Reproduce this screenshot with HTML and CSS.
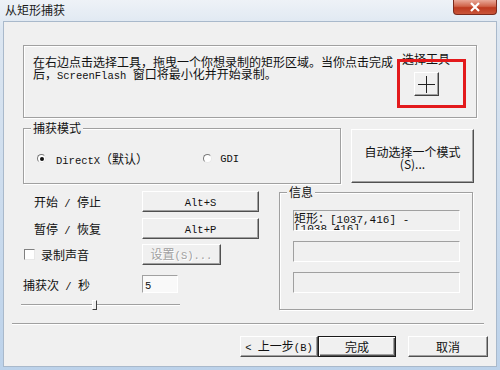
FILE: index.html
```html
<!DOCTYPE html>
<html>
<head>
  <link rel="stylesheet" href="styles.css">
</head>
<body>
  <div class="window">
    <div class="titlebar">
      <span class="title">从矩形捕获</span>
      <div class="close-btn">
        <svg width="14" height="10" viewBox="0 0 14 10"><path d="M3 1 L11 9 M11 1 L3 9" stroke="#fff" stroke-width="2.2" fill="none"/></svg>
      </div>
    </div>

    <div class="client">
      <div class="intro">
        <p class="intro-text">在右边点击选择工具，拖曳一个你想录制的矩形区域。当你点击完成<br>后，<span class="en">ScreenFlash </span>窗口将最小化并开始录制。</p>
        <div class="tool">
          <span class="tool-label">选择工具</span>
          <button class="tool-btn" type="button">
            <svg width="17" height="17" viewBox="0 0 17 17"><path d="M8.5 0 V17 M0 8.5 H17" stroke="#222" stroke-width="1" fill="none"/></svg>
          </button>
          <div class="highlight"></div>
        </div>
      </div>

      <div class="mode-row">
        <div class="group mode-group">
          <span class="legend">捕获模式</span>
          <div class="radios">
            <label class="radio"><span class="radio-dot checked"></span><span><span class="en">DirectX</span>（默认）</span></label>
            <label class="radio radio-gdi"><span class="radio-dot"></span><span class="en">GDI</span></label>
          </div>
        </div>
        <button class="btn auto-btn" type="button">自动选择一个模式<br>(S)...</button>
      </div>

      <div class="lower">
        <div class="controls">
          <div class="ctl-row">
            <span class="ctl-label indent">开始<span class="en"> / </span>停止</span>
            <button class="btn hotkey" type="button"><span class="en">Alt+S</span></button>
          </div>
          <div class="ctl-row row-pause">
            <span class="ctl-label indent">暂停<span class="en"> / </span>恢复</span>
            <button class="btn hotkey" type="button"><span class="en">Alt+P</span></button>
          </div>
          <div class="ctl-row row-audio">
            <label class="ctl-label check"><span class="checkbox"></span>录制声音</label>
            <button class="btn settings" type="button" disabled>设置<span class="en">(S)...</span></button>
          </div>
          <div class="ctl-row row-rate">
            <span class="ctl-label">捕获次<span class="en"> / </span>秒</span>
            <div class="rate-input"><span class="en">5</span></div>
          </div>
          <div class="slider">
            <div class="slider-track"></div>
            <div class="slider-thumb"></div>
          </div>
        </div>

        <div class="group info-group">
          <span class="legend">信息</span>
          <div class="field">
            <div class="field-line">矩形：<span class="en">[1037,416] -</span></div>
            <div class="field-line en">[1038,416]</div>
          </div>
          <div class="field"></div>
          <div class="field"></div>
        </div>
      </div>

      <div class="separator"></div>

      <div class="footer">
        <button class="btn footer-btn" type="button"><span class="en">&lt; </span>上一步<span class="en">(B)</span></button>
        <button class="btn footer-btn default" type="button">完成</button>
        <button class="btn footer-btn cancel" type="button">取消</button>
      </div>
    </div>
  </div>
</body>
</html>
```

FILE: styles.css
```css
body {
  margin: 0;
  font-family: "Noto Sans CJK SC", sans-serif;
  font-size: 12px;
  color: #111;
}

.en {
  font-family: "Liberation Mono", monospace;
  font-size: 10.5px;
}

.window {
  width: 500px;
  height: 370px;
  box-sizing: border-box;
  padding: 0 3px 3px 3px;
  background: linear-gradient(#eef2f7, #dce6f1 30px, #bcd2ea);
  display: flex;
  flex-direction: column;
}

.titlebar {
  height: 21px;
  display: flex;
  align-items: flex-start;
}

.title {
  margin: 2px 0 0 2px;
  line-height: 16px;
  color: #1a1a1a;
}

.close-btn {
  margin-left: auto;
  width: 44px;
  height: 15px;
  box-sizing: border-box;
  border: 1px solid #7b2a1c;
  border-top: none;
  border-radius: 0 0 4px 4px;
  background: linear-gradient(#e9a999, #d0644a 45%, #bd3a1f 55%, #c9553a);
  display: flex;
  align-items: center;
  justify-content: center;
}

.client {
  flex: 1;
  background: #f0f0f0;
  border: 1px solid #a9b9cb;
  display: flex;
  flex-direction: column;
}

/* etched frames and 3d controls */
.group {
  position: relative;
  box-sizing: border-box;
  border: 1px solid #a0a0a0;
  box-shadow: inset 1px 1px #fff, 1px 1px #fff;
}

.legend {
  position: absolute;
  top: -8px;
  left: 7px;
  padding: 0 2px;
  background: #f0f0f0;
  line-height: 14px;
}

.btn {
  font-family: "Noto Sans CJK SC", sans-serif;
  font-size: 12px;
  color: #111;
  background: #f0f0f0;
  box-sizing: border-box;
  border: 1px solid;
  border-color: #fff #505050 #505050 #fff;
  box-shadow: inset -1px -1px #a0a0a0;
  padding: 0;
  line-height: 14px;
}

/* intro box */
.intro {
  margin: 23px 0 0 19px;
  width: 454px;
  height: 73px;
  box-sizing: border-box;
  border: 1px solid #a0a0a0;
  box-shadow: inset 1px 1px #fff, 1px 1px #fff;
  display: flex;
}

.intro-text {
  margin: 10px 0 0 9px;
  width: 369px;
  line-height: 12px;
}

.tool {
  position: relative;
  margin-top: 7px;
  width: 48px;
  display: flex;
  flex-direction: column;
  align-items: center;
}

.tool-label {
  line-height: 12px;
}

.tool-btn {
  margin-top: 7px;
  width: 25px;
  height: 24px;
  padding: 0;
  background: #f0f0f0;
  border: 1px solid;
  border-color: #fff #404040 #404040 #fff;
  box-shadow: inset -1px -1px #a0a0a0;
  display: flex;
  align-items: center;
  justify-content: center;
}

.highlight {
  position: absolute;
  left: -5px;
  top: 6px;
  width: 69px;
  height: 49px;
  box-sizing: border-box;
  border: 3px solid #e31a1c;
}

/* capture mode */
.mode-row {
  margin: 10px 0 0 19px;
  display: flex;
  align-items: flex-start;
}

.mode-group {
  width: 318px;
  height: 56px;
}

.radios {
  margin: 21px 0 0 13px;
  display: flex;
  align-items: center;
}

.radio {
  display: flex;
  align-items: center;
  gap: 10px;
}

.radio-gdi {
  margin-left: 55px;
  gap: 8px;
}

.radio-dot {
  width: 9px;
  height: 9px;
  box-sizing: border-box;
  border-radius: 50%;
  border: 1px solid;
  border-color: #7a7a7a #e8e8e8 #e8e8e8 #7a7a7a;
  background: #fff;
  display: flex;
  align-items: center;
  justify-content: center;
}

.radio-dot.checked::after {
  content: "";
  width: 4px;
  height: 4px;
  border-radius: 50%;
  background: #111;
}

.auto-btn {
  margin: 1px 0 0 10px;
  width: 123px;
  height: 54px;
  padding-top: 4px;
  line-height: 12px;
}

/* lower section */
.lower {
  margin: 7px 0 0 19px;
  display: flex;
  align-items: flex-start;
}

.controls {
  width: 256px;
  display: flex;
  flex-direction: column;
}

.ctl-row {
  height: 21px;
  display: flex;
  align-items: center;
}

.ctl-label {
  width: 119px;
  flex-shrink: 0;
}

.indent {
  padding-left: 11px;
  box-sizing: border-box;
}

.row-pause {
  margin-top: 6px;
}

.row-audio {
  margin-top: 5px;
}

.row-rate {
  margin-top: 10px;
  height: 18px;
}

.hotkey {
  width: 117px;
  height: 21px;
}

.settings {
  width: 79px;
  height: 21px;
  color: #a0a0a0;
  text-shadow: 1px 1px #fff;
}

.check {
  display: flex;
  align-items: center;
  gap: 6px;
  padding-left: 1px;
  box-sizing: border-box;
}

.checkbox {
  width: 11px;
  height: 11px;
  box-sizing: border-box;
  border: 1px solid;
  border-color: #808080 #e8e8e8 #e8e8e8 #808080;
  background: #fff;
}

.rate-input {
  width: 36px;
  height: 18px;
  box-sizing: border-box;
  border: 1px solid;
  border-color: #a0a0a0 #fff #fff #a0a0a0;
  background: #f9f9f9;
  padding-left: 2px;
  line-height: 16px;
}

.slider {
  position: relative;
  margin: 7px 0 0 -2px;
  width: 159px;
  height: 10px;
}

.slider-track {
  margin-top: 4px;
  height: 2px;
  border-top: 1px solid #a0a0a0;
  border-bottom: 1px solid #fff;
  box-sizing: border-box;
}

.slider-thumb {
  position: absolute;
  left: 71px;
  top: 0;
  width: 5px;
  height: 10px;
  box-sizing: border-box;
  background: #f0f0f0;
  border: 1px solid;
  border-color: #fff #404040 #404040 #fff;
}

.info-group {
  margin-top: 1px;
  width: 194px;
  height: 118px;
  padding: 17px 0 0 13px;
  display: flex;
  flex-direction: column;
  gap: 10px;
}

.field {
  width: 167px;
  height: 21px;
  box-sizing: border-box;
  border: 1px solid;
  border-color: #a0a0a0 #fff #fff #a0a0a0;
  overflow: hidden;
  padding-top: 1px;
}

.field-line {
  height: 11px;
  line-height: 12px;
}

.field .en {
  font-size: 11px;
}

/* bottom */
.separator {
  margin: 13px 0 0 8px;
  width: 472px;
  height: 2px;
  box-sizing: border-box;
  border-top: 1px solid #a0a0a0;
  border-bottom: 1px solid #fff;
}

.footer {
  margin-top: 11px;
  padding-right: 8px;
  display: flex;
  justify-content: flex-end;
}

.footer-btn {
  width: 78px;
  height: 21px;
}

.footer-btn.default {
  width: 78px;
  border: 1px solid #1a1a1a;
  box-shadow: inset 1px 1px #fff, inset -1px -1px #505050, inset -2px -2px #a0a0a0;
}

.footer-btn.cancel {
  margin-left: 12px;
  width: 80px;
}
```
